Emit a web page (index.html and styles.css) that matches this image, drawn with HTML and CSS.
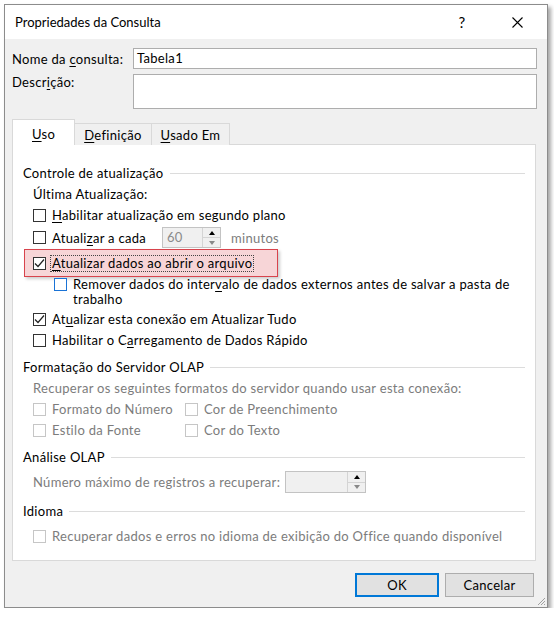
FILE: index.html
```html
<!DOCTYPE html>
<html lang="pt-BR">
<head>
    <meta charset="UTF-8">
    <meta name="viewport" content="width=device-width, initial-scale=1.0">
    <title>Propriedades da Consulta</title>
    <link rel="stylesheet" href="styles.css">
</head>
<body>
    <div class="window">
        <div class="titlebar">
            <span class="title">Propriedades da Consulta</span>
            <span class="help">?</span>
            <span class="close">
                <svg width="11" height="11" viewBox="0 0 11 11"><path d="M0.5 0.5 L10.5 10.5 M10.5 0.5 L0.5 10.5" stroke="#000" stroke-width="1.1" fill="none"/></svg>
            </span>
        </div>
        <div class="dialog">
            <div class="fields">
                <label class="name-label">Nome da <u>c</u>onsulta:</label>
                <div class="input">Tabela1</div>
                <label class="desc-label">Descr<u>i</u>ção:</label>
                <div class="input textarea"></div>
            </div>

            <div class="tabs">
                <div class="tab active"><u>U</u>so</div>
                <div class="tab"><u>D</u>efinição</div>
                <div class="tab"><u>U</u>sado Em</div>
            </div>

            <div class="panel">
                <div class="section">Controle de atualização</div>
                <div class="row">Última Atualização:</div>
                <div class="row">
                    <span class="box"></span>
                    <span><u>H</u>abilitar atualização em segundo plano</span>
                </div>
                <div class="row spin-row">
                    <span class="box"></span>
                    <span class="lead">Atuali<u>z</u>ar a cada</span>
                    <span class="spin small">
                        <span class="spin-value">60</span>
                        <span class="spin-btns"><span class="up"></span><span class="down"></span></span>
                    </span>
                    <span class="muted unit">minutos</span>
                </div>
                <div class="highlight">
                    <span class="box">
                        <svg width="11" height="11" viewBox="0 0 11 11"><path d="M1 5.5 L4 8.5 L10 1.5" stroke="#222" stroke-width="1.2" fill="none"/></svg>
                    </span>
                    <span class="focus"><u>A</u>tualizar dados ao abrir o arquivo</span>
                </div>
                <div class="row sub">
                    <span class="box blue"></span>
                    <span>Remover dados do inter<u>v</u>alo de dados externos antes de salvar a pasta de<br>trabalho</span>
                </div>
                <div class="row">
                    <span class="box">
                        <svg width="11" height="11" viewBox="0 0 11 11"><path d="M1 5.5 L4 8.5 L10 1.5" stroke="#222" stroke-width="1.2" fill="none"/></svg>
                    </span>
                    <span>At<u>u</u>alizar esta conexão em Atualizar Tudo</span>
                </div>
                <div class="row">
                    <span class="box"></span>
                    <span>Habilitar o C<u>a</u>rregamento de Dados Rápido</span>
                </div>

                <div class="section">Formatação do Servidor OLAP</div>
                <div class="row muted">Recuperar os seguintes formatos do servidor quando usar esta conexão:</div>
                <div class="row muted">
                    <span class="opt"><span class="box"></span><span>Formato do Número</span></span>
                    <span class="opt"><span class="box"></span><span>Cor de Preenchimento</span></span>
                </div>
                <div class="row muted">
                    <span class="opt"><span class="box"></span><span>Estilo da Fonte</span></span>
                    <span class="opt"><span class="box"></span><span>Cor do Texto</span></span>
                </div>

                <div class="section">Análise OLAP</div>
                <div class="row field-row muted">
                    <span class="field-label">Número máximo de registros a recuperar:</span>
                    <span class="spin wide">
                        <span class="spin-value"></span>
                        <span class="spin-btns"><span class="up"></span><span class="down"></span></span>
                    </span>
                </div>

                <div class="section">Idioma</div>
                <div class="row spaced muted">
                    <span class="box"></span>
                    <span>Recuperar dados e erros no idioma de exibição do Office quando disponível</span>
                </div>
            </div>

            <div class="buttons">
                <button class="btn default">OK</button>
                <button class="btn cancel">Cancelar</button>
            </div>
        </div>
        <svg class="grip" width="10" height="10" viewBox="0 0 10 10">
            <path d="M9 2 L2 9 M9 5 L5 9 M9 8 L8 9" stroke="#a0a0a0" stroke-width="1" fill="none"/>
        </svg>
    </div>
</body>
</html>
```

FILE: styles.css
```css
* {
    box-sizing: border-box;
    margin: 0;
    padding: 0;
}

body {
    font-family: Lato, "Noto Sans", sans-serif;
    font-size: 13px;
    letter-spacing: 0.3px;
    color: #000;
    background-color: #fff;
}

u {
    text-underline-offset: 2px;
}

.window {
    position: relative;
    width: 544px;
    height: 604px;
    margin: 4px 0 0 4px;
    border: 1px solid #8c8c8c;
    box-shadow: 3px 3px 4px rgba(0, 0, 0, 0.35);
    display: flex;
    flex-direction: column;
}

.titlebar {
    height: 34px;
    display: flex;
    align-items: center;
    padding-left: 10px;
    background: #fff;
}

.title {
    flex: 1;
    font-size: 13px;
    letter-spacing: 0;
}

.help {
    width: 24px;
    margin-right: 31px;
    text-align: center;
    font-size: 15px;
}

.close {
    width: 24px;
    margin-right: 18px;
    display: flex;
    justify-content: center;
}

.dialog {
    flex: 1;
    background: #f0f0f0;
    padding: 9px 10px 0 7px;
}

.fields {
    display: grid;
    grid-template-columns: 121px 1fr;
    row-gap: 5px;
}

.name-label {
    align-self: center;
}

.desc-label {
    line-height: 16px;
}

.input {
    height: 21px;
    border: 1px solid #adadad;
    background: #fff;
    padding: 0 3px;
    line-height: 19px;
}

.textarea {
    height: 35px;
}

.tabs {
    display: flex;
    align-items: flex-end;
    height: 26px;
    margin-top: 10px;
    margin-bottom: -1px;
    position: relative;
    z-index: 1;
}

.tab {
    height: 22px;
    line-height: 22px;
    padding: 0 9px;
    border: 1px solid #d9d9d9;
    border-bottom: none;
    background: #f0f0f0;
    margin-left: -1px;
}

.tab.active {
    height: 26px;
    line-height: 28px;
    padding: 0 19px;
    margin-left: 0;
    background: #fff;
}

.panel {
    width: 524px;
    height: 417px;
    background: #fff;
    border: 1px solid #d9d9d9;
    padding: 10px 10px 0 10px;
}

.section {
    display: flex;
    align-items: center;
    gap: 6px;
    height: 18px;
    margin-top: 9px;
}

.section::after {
    content: "";
    flex: 1;
    border-top: 1px solid #dcdcdc;
}

.row {
    display: flex;
    align-items: center;
    gap: 6px;
    height: 18px;
    margin-top: 3px;
    padding-left: 10px;
    white-space: nowrap;
}

.box {
    width: 13px;
    height: 13px;
    flex: none;
    border: 1px solid #333;
    background: #fff;
    display: flex;
    align-items: center;
    justify-content: center;
}

.box.blue {
    border-color: #1a73d6;
}

.muted {
    color: #7c7c7c;
}

.muted .box {
    border-color: #c6c6c6;
}

.spin-row {
    height: 21px;
}

.lead {
    width: 104px;
}

.unit {
    margin-left: 4px;
}

.spin {
    display: flex;
    height: 21px;
    border: 1px solid #c3c3c3;
    background: #f0f0f0;
}

.spin.small {
    width: 59px;
}

.spin.wide {
    width: 81px;
    height: 22px;
}

.spin-value {
    flex: 1;
    padding-left: 4px;
    line-height: 19px;
    color: #8a8a8a;
}

.spin-btns {
    width: 18px;
    display: flex;
    flex-direction: column;
    border-left: 1px solid #d4d4d4;
}

.spin-btns span {
    flex: 1;
    display: flex;
    align-items: center;
    justify-content: center;
}

.spin-btns .up {
    border-bottom: 1px solid #d4d4d4;
}

.spin-btns .up::after {
    content: "";
    border-left: 3.5px solid transparent;
    border-right: 3.5px solid transparent;
    border-bottom: 4px solid #000;
}

.spin-btns .down::after {
    content: "";
    border-left: 3.5px solid transparent;
    border-right: 3.5px solid transparent;
    border-top: 4px solid #888;
}

.highlight {
    display: flex;
    align-items: center;
    gap: 5px;
    width: 254px;
    height: 28px;
    margin: 1px 0 0 1px;
    padding-left: 8px;
    background: #f7d5d7;
    border: 1px solid #d8434c;
    box-shadow: 2px 2px 3px rgba(0, 0, 0, 0.2);
    white-space: nowrap;
}

.focus {
    outline: 1px dotted #444;
    padding: 0 1px;
    line-height: 15px;
}

.row.sub {
    height: auto;
    align-items: flex-start;
    padding-left: 31px;
    margin-top: 0;
    margin-bottom: 2px;
    line-height: 15px;
}

.row.sub .box {
    margin-top: 1px;
}

.opt {
    display: flex;
    align-items: center;
    gap: 6px;
}

.opt:first-child {
    width: 146px;
}

.field-row {
    height: 22px;
    margin-top: 5px;
}

.field-label {
    width: 246px;
}

.spaced {
    margin-top: 7px;
}

.buttons {
    display: flex;
    justify-content: flex-end;
    gap: 6px;
    margin-top: 12px;
    padding-right: 3px;
}

.btn {
    height: 24px;
    width: 84px;
    font-family: inherit;
    font-size: 13px;
    letter-spacing: 0.3px;
    background: #e1e1e1;
    border: 1px solid #adadad;
    color: #000;
}

.btn.default {
    border: 2px solid #0078d7;
}

.btn.cancel {
    width: 89px;
}

.grip {
    position: absolute;
    right: 1px;
    bottom: 1px;
}
```
